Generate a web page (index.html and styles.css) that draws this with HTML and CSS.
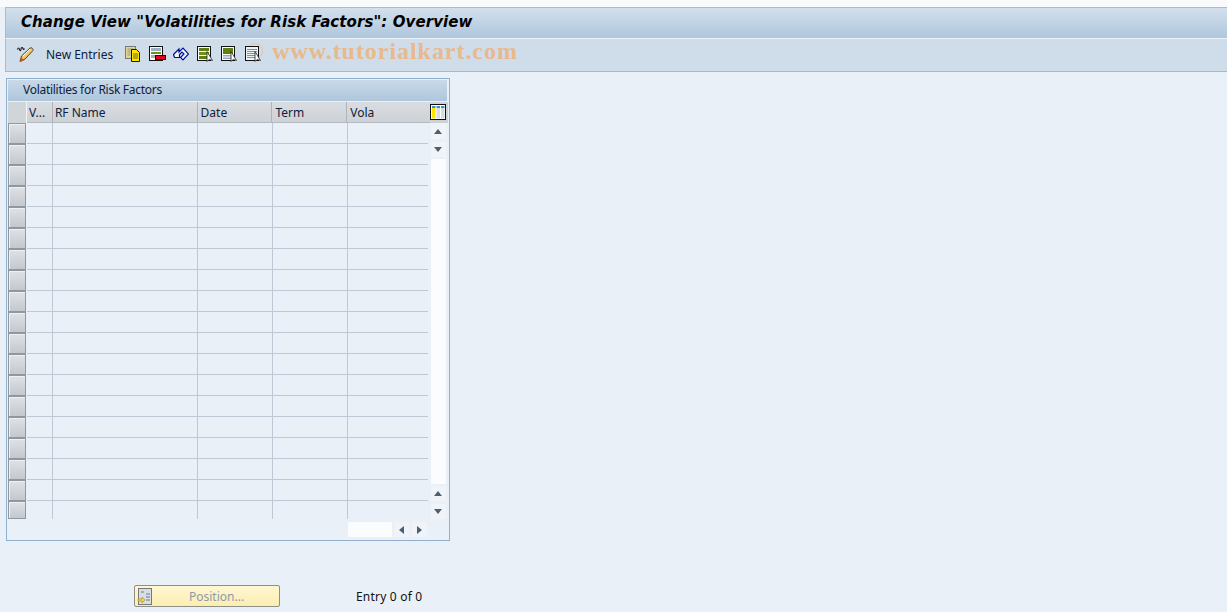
FILE: index.html
```html
<!DOCTYPE html>
<html lang="en">
<head>
<meta charset="utf-8">
<title>Change View</title>
<link rel="stylesheet" href="styles.css">
</head>
<body>
<div class="page">
  <div class="title-bar"><h1>Change View "Volatilities for Risk Factors": Overview</h1></div>
  <div class="toolbar">
    <svg class="ic-pen" width="18" height="17" viewBox="0 0 18 17"><path d="M.5 3.500c.5-2 1.500-2 2 0s1.500 1 1.500-.5 1.500-2 2-.5 1 1 1.500 0" fill="none" stroke="#222" stroke-width="1.100"/><path d="M3 15.500l1.500-5.500 8.500-8c1.500-1 3.500 1 3 2.500l-8 8.500z" fill="#f6c95a" stroke="#444" stroke-width="1"/><path d="M3 16l1.200-4.500 3.300 2.800z" fill="#d8541e"/><path d="M6 10l7-7" stroke="#fff"/></svg>
    <span class="tool-text">New Entries</span>
    <div class="icons">
      <svg width="16" height="16" viewBox="0 0 16 16"><rect x=".5" y=".5" width="10" height="12" fill="#e3d58c" stroke="#7a7a7a"/><path d="M2.500 3h6M2.500 5h3M2.500 7h3M2.500 9h3" stroke="#998"/><path d="M6.500 3.500h5l3 3v9h-8z" fill="#ffe600" stroke="#0000c8"/><path d="M8 8h5M8 10h5M8 12h5" stroke="#6c6420"/></svg>
      <svg class="ic-over" width="16" height="16" viewBox="0 0 16 16"><rect x=".5" y=".5" width="13" height="14" fill="#fff" stroke="#111"/><rect x="2" y="2" width="10" height="3" fill="#9db2bf"/><rect x="2" y="6" width="10" height="2" fill="#6f8f1e"/><rect x="2" y="9" width="10" height="3" fill="#9db2bf"/><rect x="6.500" y="9.500" width="10" height="4" fill="#e3001b" stroke="#111"/></svg>
      <svg width="16" height="16" viewBox="0 0 16 16"><path d="M.5 8.500L6 3v3l4-4 5.500 6L10 14l-2.500-2.500L11 8 9 6 6.500 8.500V11.500H1.500z" fill="#f4f8fc" stroke="#00109a" stroke-width="1.200"/></svg>
      <svg width="16" height="16" viewBox="0 0 16 16"><rect x=".5" y=".5" width="13" height="14" fill="#fff" stroke="#111"/><rect x="2" y="2" width="10" height="3" fill="#5f7f14"/><rect x="2" y="6" width="10" height="3" fill="#6f8f1e"/><rect x="2" y="10" width="10" height="3" fill="#5f7f14"/><path d="M10 5.500v10l2-2 3.500 1z" fill="#fff" stroke="#222" stroke-width=".8"/></svg>
      <svg width="16" height="16" viewBox="0 0 16 16"><rect x=".5" y=".5" width="13" height="14" fill="#fff" stroke="#111"/><rect x="2" y="2" width="10" height="6" fill="#5f7f14"/><rect x="2" y="9" width="10" height="1.500" fill="#8fa9b8"/><rect x="2" y="11.500" width="10" height="1.500" fill="#8fa9b8"/><path d="M10 5.500v10l2-2 3.500 1z" fill="#fff" stroke="#222" stroke-width=".8"/></svg>
      <svg class="ic-over" width="16" height="16" viewBox="0 0 16 16"><circle cx="10" cy="5" r="7.500" fill="none" stroke="#e8c4a0"/><rect x=".5" y=".5" width="13" height="14" fill="#eef2f4" stroke="#111"/><path d="M2 3.500h10M2 5.500h10M2 7.500h10M2 9.500h10M2 11.500h10" stroke="#7d949f"/><path d="M10 5.500v10l2-2 3.500 1z" fill="#fff" stroke="#222" stroke-width=".8"/></svg>
    </div>
    <span class="watermark">www.tutorialkart.com</span>
  </div>
  <div class="panel">
    <div class="panel-title">Volatilities for Risk Factors</div>
    <div class="grid-wrap">
      <div class="grid">
        <div class="corner"></div>
        <div class="th c-v">V...</div>
        <div class="th c-name">RF Name</div>
        <div class="th c-date">Date</div>
        <div class="th c-term">Term</div>
        <div class="th c-vola">Vola</div>
        <div class="cfg">
          <svg width="16" height="16" viewBox="0 0 16 16"><rect x=".5" y=".5" width="15" height="15" fill="#fff" stroke="#111"/><path d="M2 2h3.500v2H2zM6.500 2H10v2H6.500zM11 2h3.500v2H11z" fill="#3f8fc0"/><rect x="2" y="4" width="3.500" height="10.500" fill="#ffe600"/><rect x="6.500" y="4" width="3.500" height="10.500" fill="#d5dde2"/><rect x="11" y="4" width="3.500" height="10.500" fill="#d5dde2"/></svg>
        </div>
      </div>
      <div class="body">
        <div class="rows" id="rows"></div>
        <div class="vscroll">
          <div class="sbtn"><i class="up"></i></div>
          <div class="sbtn"><i class="down"></i></div>
          <div class="strack"></div>
          <div class="sbtn"><i class="up"></i></div>
          <div class="sbtn"><i class="down"></i></div>
        </div>
      </div>
      <div class="hscroll">
        <div class="htrack"></div>
        <div class="sbtn"><i class="left"></i></div>
        <div class="sbtn"><i class="right"></i></div>
      </div>
    </div>
  </div>
  <div class="footer">
    <button class="pos-btn" type="button">
      <svg class="pos-ic" width="16" height="17" viewBox="0 0 16 17"><rect x="1.500" y=".5" width="13" height="16" fill="#d8dfe4" stroke="#777"/><path d="M4 4h3M9 6h4M9 12h4M9 9h4" stroke="#778"/><path d="M1 11h4V9l3 3-3 3v-2H1z" fill="#f4d24a" stroke="#a08a30" stroke-width=".6"/></svg>
      <span>Position...</span>
    </button>
    <span class="entry">Entry 0 of 0</span>
  </div>
</div>
<script src="rows.js"></script>
</body>
</html>
```
FILE: rows.js
```js
var rows = document.getElementById('rows');
for (var i = 0; i < 19; i++) {
  var r = document.createElement('div');
  r.className = 'row';
  r.innerHTML = '<div class="sel"></div><div class="td c-v"></div><div class="td c-name"></div><div class="td c-date"></div><div class="td c-term"></div><div class="td c-vola"></div>';
  rows.appendChild(r);
}
```
FILE: styles.css
```css
* { box-sizing: border-box; }
html, body { margin: 0; height: 100%; }
body { background: #e9f0f7; font-family: "Noto Sans", sans-serif; font-size: 12px; color: #111; overflow: hidden; }
.page { width: 1227px; height: 612px; padding-top: 7px; background: linear-gradient(#f8fafc 0, #f8fafc 7px, #e9f0f7 7px); display: flex; flex-direction: column; }
.title-bar { margin-left: 5px; height: 32px; padding-bottom: 3px; background: linear-gradient(#d3e0ec, #aec6dc); border-top: 1px solid #a9bccd; border-bottom: 1px solid #eef3f8; border-left: 1px solid #a9bccd; display: flex; align-items: center; padding-left: 15px; }
h1 { margin: 0; font: italic bold 15px "DejaVu Sans", sans-serif; letter-spacing: .08px; color: #000; white-space: nowrap; }
.toolbar { margin-left: 5px; height: 33px; padding-bottom: 2px; background: #cedde9; border-bottom: 1px solid #a5b9cc; border-left: 1px solid #a9bccd; display: flex; align-items: center; padding-left: 11px; }
.ic-pen { flex: none; }
.ic-over { overflow: visible; }
.tool-text { margin-left: 11px; color: #10203a; }
.icons { display: flex; margin-left: 12px; gap: 8px; }
.watermark { margin: 0 0 5px 11px; font: bold 24px "Liberation Serif", serif; color: #e8b98c; letter-spacing: .95px; }
.panel { margin: 6px 0 0 6px; width: 444px; height: 463px; border: 1px solid #8fb0cf; padding: 1px; display: flex; flex-direction: column; }
.panel-title { height: 21px; background: linear-gradient(#c9d9e8, #aec6dc); padding-left: 15px; line-height: 20px; letter-spacing: -.28px; color: #10203a; margin-right: 1px; }
.grid-wrap { flex: 1; display: flex; flex-direction: column; }
.grid { height: 21px; display: flex; margin-top: 1px; }
.corner { width: 19px; background: #d0d5da; border-right: 1px solid #f2f4f6; }
.th { background: linear-gradient(#dadde0, #cdd2d7); border-right: 1px solid #aeb4bb; border-bottom: 1px solid #b4bac0; padding-left: 2px; line-height: 22px; color: #10203a; white-space: nowrap; overflow: hidden; }
.c-v { width: 26px; }
.c-name { width: 145px; }
.c-date { width: 75px; }
.c-term { width: 75px; }
.c-vola { width: 81px; }
.th.c-date, .th.c-term, .th.c-vola { padding-left: 3px; }
.td.c-vola { width: 80px; border-right: 0; }
.th.c-vola { width: 83px; border-right: 0; }
.cfg { width: 18px; background: #cdd2d7; padding: 2px 0 0 0; }
.body { display: flex; height: 396px; }
.rows { width: 423px; }
.row { display: flex; height: 21px; }
.row:last-child { height: 18px; }
.sel { width: 18px; background: linear-gradient(#dfe2e5, #c3c8ce); border: 1px solid #8f98a1; border-width: 1px 1px 1px 1px; box-shadow: inset 1px 1px #eef1f3; margin-right: 1px; }
.td { border-right: 1px solid #bfc9d5; border-bottom: 1px solid #bfc9d5; }
.row:last-child .td { border-bottom: 0; }
.vscroll { width: 15px; padding-top: 1px; display: flex; flex-direction: column; gap: 3px; }
.sbtn { width: 15px; height: 15px; background: #f0f4f8; display: flex; align-items: center; justify-content: center; flex: none; }
.strack { flex: 1; background: #fbfcfd; width: 15px; margin: -1px 0; }
i { display: block; width: 0; height: 0; border: 4px solid transparent; }
.up { border-top: 0; border-bottom: 5px solid #4a6072; margin-right: 1px; }
.down { border-bottom: 0; border-top: 5px solid #4a6072; margin-right: 1px; }
.left { border-left: 0; border-right: 5px solid #4a6072; margin-right: 1px; }
.right { border-right: 0; border-left: 5px solid #4a6072; margin-right: 1px; }
.hscroll { display: flex; margin-left: 340px; gap: 3px; margin-top: 3px; }
.htrack { width: 44px; height: 15px; background: #fbfcfd; margin-right: -1px; }
.footer { display: flex; align-items: center; margin-top: 44px; padding-left: 134px; }
.pos-btn { width: 146px; height: 22px; padding: 0 0 0 2px; border: 1px solid #8f8f86; border-radius: 2px; background: linear-gradient(#fff6d2, #fbeeb0); display: flex; align-items: center; font: 12px "Noto Sans", sans-serif; color: #8e9aa8; }
.pos-btn span { margin-left: 36px; }
.pos-ic { flex: none; }
.entry { margin-left: 76px; color: #111; letter-spacing: .2px; }
```
